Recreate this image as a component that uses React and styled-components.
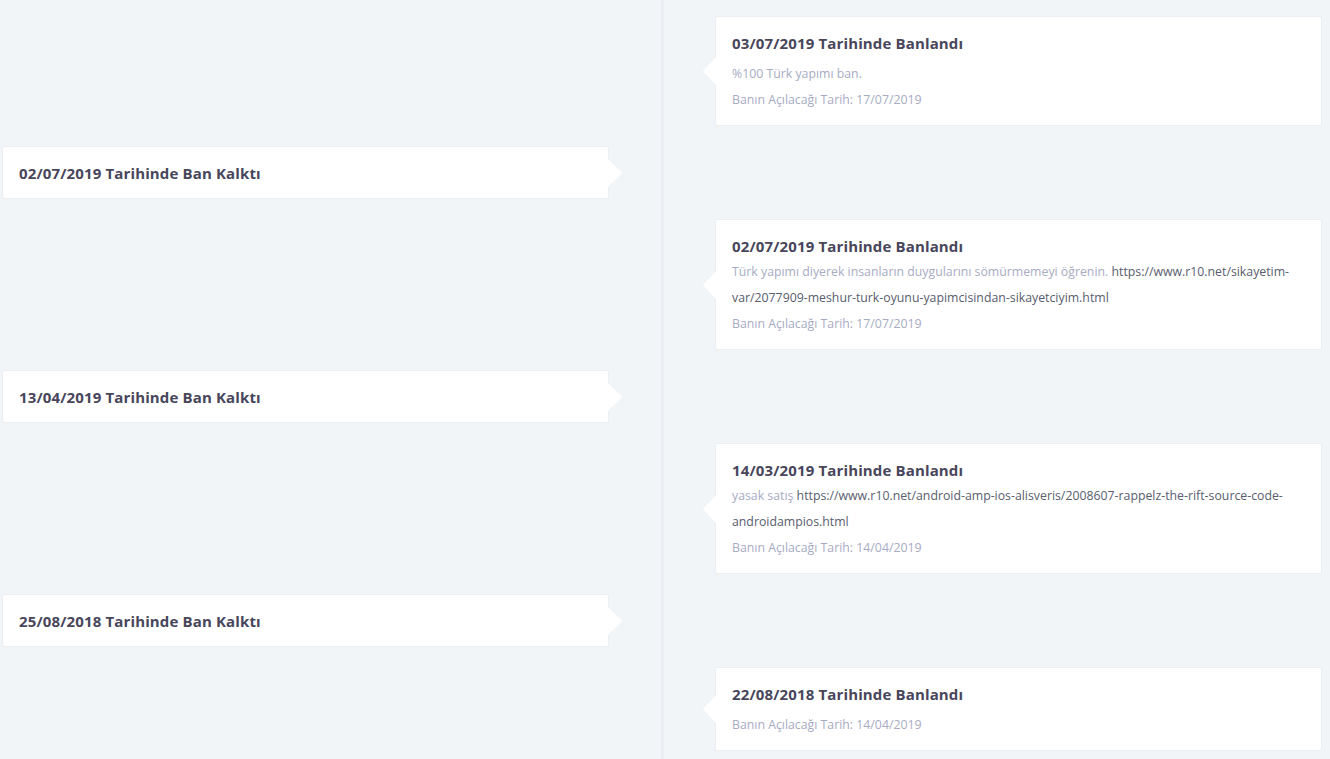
import React from 'react';
import styled, { createGlobalStyle, css } from 'styled-components';

const GlobalStyle = createGlobalStyle`
  html, body {
    margin: 0;
    padding: 0;
    background-color: #f2f5f8;
    font-family: 'Open Sans', 'Liberation Sans', sans-serif;
    -webkit-font-smoothing: antialiased;
  }
`;

const Timeline = styled.div`
  position: relative;
  padding: 16px 8px 24px 2px;
  display: flex;
  flex-direction: column;
  gap: 20px;

  /* vertical spine between the two columns */
  &::before {
    content: '';
    position: absolute;
    top: 0;
    bottom: 0;
    left: calc(2px + (100% - 10px) / 2 - 1px);
    width: 3px;
    background-color: #eaeef2;
  }
`;

const Row = styled.div`
  display: flex;
  justify-content: ${(p) => (p.side === 'right' ? 'flex-end' : 'flex-start')};
`;

const Card = styled.div`
  position: relative;
  width: calc(50% - 53px);
  box-sizing: border-box;
  background-color: #ffffff;
  border: 1px solid #ebeef2;
  border-radius: 2px;
  padding: 17px 16px ${(p) => (p.side === 'right' ? '12px' : '16px')};

  /* pointer towards the spine */
  &::after {
    content: '';
    position: absolute;
    top: 50%;
    transform: translateY(-50%);
    width: 0;
    height: 0;
    border-top: 14px solid transparent;
    border-bottom: 14px solid transparent;
    ${(p) =>
      p.side === 'right'
        ? css`
            left: -13px;
            border-right: 13px solid #ffffff;
          `
        : css`
            right: -14px;
            border-left: 14px solid #ffffff;
          `}
  }
`;

const Title = styled.div`
  font-size: 15px;
  font-weight: 700;
  line-height: 18px;
  letter-spacing: 0.14px;
  color: #48465b;
  margin-bottom: ${(p) => (p.tight ? '4px' : '9px')};
  ${(p) => p.last && 'margin-bottom: 0;'}
`;

const Text = styled.div`
  font-size: 12.3px;
  line-height: 26px;
  color: #a7abc3;
`;

const Link = styled.a`
  color: #595d6e;
  text-decoration: none;
`;

const items = [
  {
    side: 'right',
    title: '03/07/2019 Tarihinde Banlandı',
    text: '%100 Türk yapımı ban.',
    until: '17/07/2019',
  },
  { side: 'left', title: '02/07/2019 Tarihinde Ban Kalktı' },
  {
    side: 'right',
    title: '02/07/2019 Tarihinde Banlandı',
    text: 'Türk yapımı diyerek insanların duygularını sömürmemeyi öğrenin.',
    link: 'https://www.r10.net/sikayetim-var/2077909-meshur-turk-oyunu-yapimcisindan-sikayetciyim.html',
    until: '17/07/2019',
  },
  { side: 'left', title: '13/04/2019 Tarihinde Ban Kalktı' },
  {
    side: 'right',
    title: '14/03/2019 Tarihinde Banlandı',
    text: 'yasak satış',
    link: 'https://www.r10.net/android-amp-ios-alisveris/2008607-rappelz-the-rift-source-code-androidampios.html',
    until: '14/04/2019',
  },
  { side: 'left', title: '25/08/2018 Tarihinde Ban Kalktı' },
  {
    side: 'right',
    title: '22/08/2018 Tarihinde Banlandı',
    until: '14/04/2019',
  },
];

function App() {
  return (
    <>
      <GlobalStyle />
      <Timeline>
        {items.map((item, i) => (
          <Row key={i} side={item.side}>
            <Card side={item.side}>
              <Title tight={!!item.link} last={item.side === 'left'}>
                {item.title}
              </Title>
              {item.text && (
                <Text>
                  {item.text}
                  {item.link && (
                    <>
                      {' '}
                      <Link href="#">{item.link}</Link>
                    </>
                  )}
                </Text>
              )}
              {item.until && <Text>Banın Açılacağı Tarih: {item.until}</Text>}
            </Card>
          </Row>
        ))}
      </Timeline>
    </>
  );
}

export default App;
